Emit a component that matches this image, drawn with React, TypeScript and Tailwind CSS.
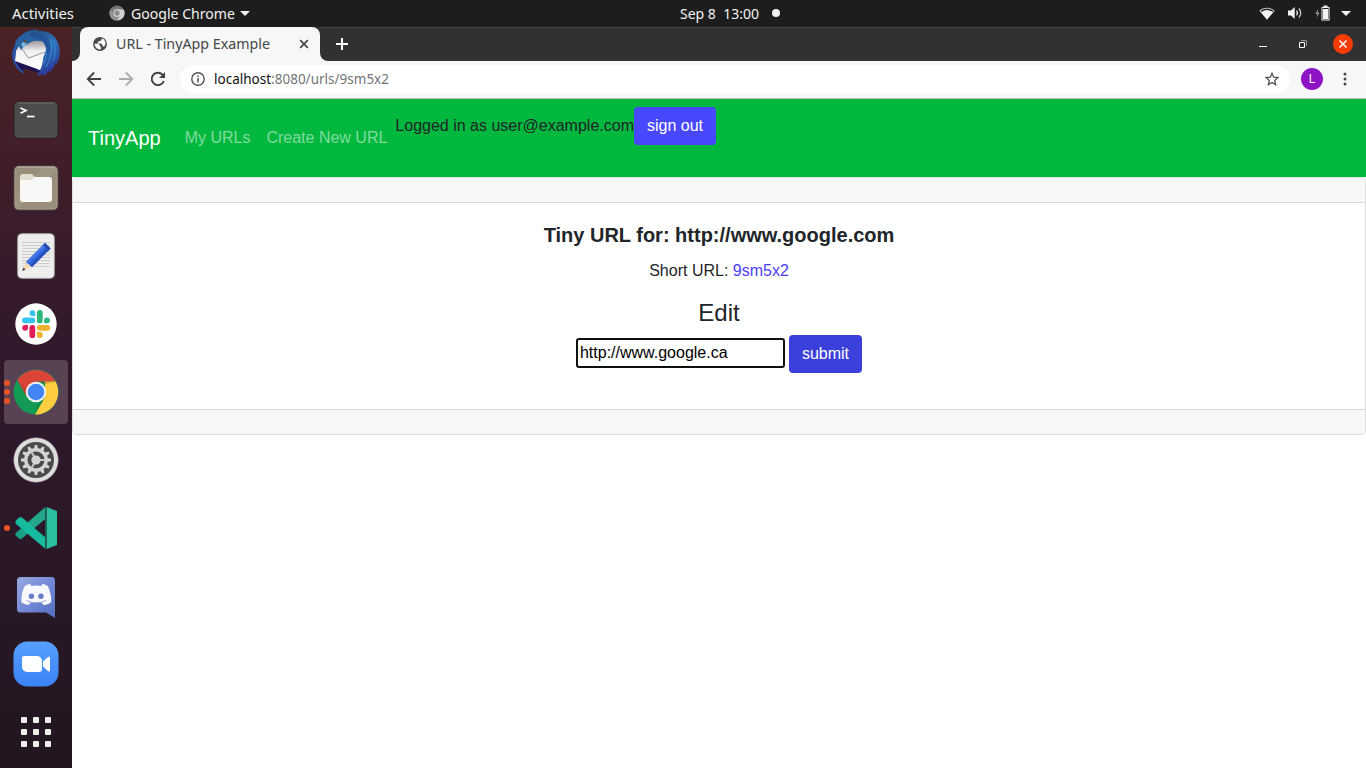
import type { ReactNode } from "react";

const UI = "font-['Noto_Sans',sans-serif]";

function Label({ width, size, children, className }: { width: number; size: number; children: string; className: string }) {
  return (
    <svg width={width + 2} height="20" className={`shrink-0 overflow-visible ${UI} ${className}`} fill="currentColor">
      <text x="0" y="15" fontSize={size} textLength={width} lengthAdjust="spacingAndGlyphs" xmlSpace="preserve">{children}</text>
    </svg>
  );
}

function TopBar() {
  return (
    <header className="flex h-[27px] shrink-0 items-center bg-[#1d1d1d] text-[#f2f2f2]">
      <div className="flex w-[680px] items-center pl-3">
        <Label width={62} size={14} className="">Activities</Label>
        <svg className="-mt-px ml-[33px] mr-[6px] shrink-0" width="16" height="16" viewBox="0 0 16 16">
          <circle cx="8" cy="8" r="7.6" fill="#777" />
          <path d="M8 4.4h6.7A7.6 7.6 0 0 1 8 15.6l3-5.6z" fill="#d0d0d0" />
          <path d="M1.6 4A7.6 7.6 0 0 0 8 15.6l2.6-5L5 10z" fill="#929292" />
          <circle cx="8" cy="8" r="3.7" fill="#ddd" />
          <circle cx="8" cy="8" r="2.7" fill="#8c8c8c" />
        </svg>
        <Label width={104} size={14} className="">Google Chrome</Label>
        <svg className="ml-[3px]" width="10" height="5" viewBox="0 0 10 5"><path d="M0 0h10L5 5z" fill="#f2f2f2" /></svg>
      </div>
      <Label width={79} size={14} className="">{"Sep 8  13:00"}</Label>
      <div className="-mt-px ml-[11px] size-2 rounded-full bg-[#f2f2f2]" />
      <div className="-mt-px ml-auto flex items-center pr-[15px]">
        <svg width="16" height="13" viewBox="0 0 16 13">
          <path d="M.4 3.7C4.8-.2 11.2-.2 15.6 3.7L8 12.8z" fill="#f2f2f2" />
          <path d="M2 4.4c3.7-2.6 8.3-2.6 12 0" fill="none" stroke="#1d1d1d" strokeWidth="1.4" />
        </svg>
        <svg className="ml-[12px]" width="16" height="14" viewBox="0 0 16 14">
          <path d="M1 4.5h3L7.7 1v12L4 9.5H1z" fill="#f2f2f2" />
          <path d="M9.6 4.7q1.6 2.3 0 4.6" fill="none" stroke="#f2f2f2" strokeWidth="1.3" />
          <path d="M12 2.5q3.4 4.5 0 9" fill="none" stroke="#ccc" strokeWidth="1.3" />
        </svg>
        <svg className="ml-[12px]" width="16" height="16" viewBox="0 0 16 16">
          <path d="M3.2 4L.4 9h2L1.5 13l3-5.3H2.8z" fill="#999" />
          <path d="M8.5 .5h4V2h2v13.5h-8V2h2z" fill="#f2f2f2" />
          <path d="M7.5 3h6v11.5h-6z" fill="#1d1d1d" /><path d="M8 4h5v10H8z" fill="#f2f2f2" />
        </svg>
        <svg className="ml-[10px]" width="10" height="5" viewBox="0 0 10 5"><path d="M0 0h10L5 5z" fill="#f2f2f2" /></svg>
      </div>
    </header>
  );
}

function DockItem({ children, active, dots = 0 }: { children: ReactNode; active?: boolean; dots?: number }) {
  return (
    <div className="relative flex h-[68px] shrink-0 items-center justify-center">
      <div className={active ? "flex size-16 items-center justify-center rounded-[4px] bg-[#574354]" : "flex size-16 items-center justify-center"}>{children}</div>
      {dots > 0 && (
        <div className="absolute left-1 top-0 flex h-full flex-col justify-center gap-[3px]">
          {Array.from({ length: dots }, (_, i) => <i key={i} className="block size-[6px] rounded-full bg-[#e95420]" />)}
        </div>
      )}
    </div>
  );
}

const teeth = Array.from({ length: 12 }, (_, i) => i * 30);

function Dock() {
  return (
    <nav className="flex w-[72px] shrink-0 flex-col justify-end overflow-hidden bg-linear-to-b from-[#4b2226] from-0% via-[#30182d] via-45% to-[#231620] pb-[2px]">
      <DockItem>
        <svg width="50" height="50" viewBox="0 0 50 50" className="overflow-visible">
          <defs>
            <linearGradient id="bird" x1="0" y1="0" x2=".5" y2="1"><stop stopColor="#214a80" /><stop offset=".25" stopColor="#255489" /><stop offset=".55" stopColor="#2b74bd" /><stop offset="1" stopColor="#2b3f9c" /></linearGradient>
            <linearGradient id="letter" x1="0" y1="0" x2="0" y2="1"><stop stopColor="#8d8790" /><stop offset=".4" stopColor="#f3f2f3" /><stop offset="1" stopColor="#fff" /></linearGradient>
          </defs>
          <path d="M5 17C0 23 0 32 4 38c2 4 5 7 10 9l-3-6 9 2L9 22z" fill="#2951a3" />
          <path d="M4 34l2 3c2 3 4 6 7 8l-1-4 17 5 1-3-22-10z" fill="#211052" />
          <path d="M7 14C11 6 18 2.500 24 2.500c2 0 3 .5 4 1.500 10-1 17 5 19.500 13 2.500 8 1 15-2 20l-1-1c-1 4-3 7-6 9l-1-1-4 5-1-2-7 2 4-6-4 1 5-9-1-15z" fill="url(#bird)" />
          <path d="M5 17l8-3 18-2 4 9c0 5-3 8-3 12-1 4-1 7-3 10L4 34l1-8z" fill="url(#letter)" />
          <path d="M9 19l8.500 12L34 25" fill="none" stroke="#8a868e" strokeWidth=".9" />
          <path d="M5 24c-3-7 0-12 4-15C13 6 17 4 21 4c-2 2-2 4-1 6 5-2 13 0 16 6-7-3-14-3-19 1l-4 2-3 4-2-4z" fill="#285f9f" />
          <path d="M12 15l4 1-4 5-2-4z" fill="#71b9dd" /><circle cx="14" cy="14.500" r="1.400" fill="#5c5143" />
          <path d="M21 6c9-2 16 3 18 10 1 6-1 12-5 17l2-10C34 15 29 10 21 10z" fill="#235096" opacity=".8" />
          <path d="M39 12q5 12-4 28M43 16q3 9-1 18M36 26l-4 12" stroke="#348dce" strokeWidth="1" fill="none" />
        </svg>
      </DockItem>
      <DockItem>
        <svg width="46" height="38" viewBox="0 0 46 38">
          <rect x="1" y="1" width="44" height="36" rx="4" fill="#4c4c4c" stroke="#2a2225" />
          <path d="M4.5 1.9h37" stroke="#858585" strokeWidth=".8" /><path d="M4 35.8h38" stroke="#606060" strokeWidth=".8" />
          <path d="M7.5 7l5.5 2.600-5.500 2.600" fill="none" stroke="#fff" strokeWidth="1.700" /><path d="M14 15.500h7.500" stroke="#fff" strokeWidth="1.700" />
        </svg>
      </DockItem>
      <DockItem>
        <svg width="46" height="46" viewBox="0 0 46 46">
          <rect x="1" y="1" width="44" height="44" rx="4.5" fill="#988e7b" stroke="#4d4140" />
          <path d="M2 31L31 2h11a2 2 0 0 1 2 2L4 44a2 2 0 0 1-2-2z" fill="#9f9582" />
          <path d="M4 2h38" stroke="#c5bfb3" /><rect x="2" y="2" width="42" height="42" rx="3.5" fill="none" stroke="#aaa18f" strokeWidth=".7" />
          <path d="M7 19v-7a3 3 0 0 1 3-3h8q1.5 0 2.5 1.5T23 12h13v7z" fill="#e2dfd2" />
          <path d="M7 15h12l3-3h14a3 3 0 0 1 3 3v19a3 3 0 0 1-3 3H10a3 3 0 0 1-3-3z" fill="#f8f8f7" />
        </svg>
      </DockItem>
      <DockItem>
        <svg width="38" height="46" viewBox="0 0 38 46">
          <rect x=".7" y=".7" width="36.6" height="44.6" rx="4" fill="#eee" stroke="#a9a5a8" />
          <path d="M5 9.5h28M5 12.5h28M5 15.5h28M5 18.5h28M5 21.5h28M5 24.5h28M5 27.5h28M5 30.5h28M5 33.5h28" stroke="#ccc" />
          <path d="M5 38l4-9 6 5z" fill="#f7d9b9" /><path d="M5 38l1.400-3.200 2.200 1.700z" fill="#333" />
          <path d="M9 29L28 10l5.500 5.500L15 34z" fill="#3264dc" /><path d="M9 29L28 10l2 2-19 18.700z" fill="#4777e7" /><path d="M13 32.300L31.500 13.500l2 2L15 34z" fill="#2450c0" />
          <path d="M26 12l2-2 5.500 5.500-2 2z" fill="#234cad" />
        </svg>
      </DockItem>
      <DockItem>
        <svg width="42" height="42" viewBox="0 0 42 42">
          <circle cx="21" cy="21" r="20.7" fill="#fff" />
          <g fill="#36c5f0"><path d="M20.3 13h-3a2.9 2.9 0 1 1 3-2.9z" /><rect x="7" y="14.4" width="13.3" height="5.8" rx="2.9" /></g>
          <g fill="#2eb67d"><rect x="21.9" y="7" width="5.8" height="13.3" rx="2.9" /><path d="M29.1 20.3v-3a2.9 2.9 0 1 1 2.9 3z" /></g>
          <g fill="#ecb22e"><rect x="21.9" y="21.9" width="13.3" height="5.8" rx="2.9" /><path d="M21.9 29.1h3a2.9 2.9 0 1 1-3 2.9z" /></g>
          <g fill="#e01e5a"><rect x="14.4" y="21.9" width="5.8" height="13.3" rx="2.9" /><path d="M13 21.9v3A2.9 2.9 0 1 1 10 21.9z" /></g>
        </svg>
      </DockItem>
      <DockItem active dots={3}>
        <svg width="46" height="46" viewBox="0 0 46 46">
          <circle cx="23" cy="23" r="22.5" fill="#139b55" />
          <path d="M4.3 11A22.5 22.5 0 0 1 42.6 12.5H23L14 28z" fill="#dc4437" />
          <path d="M42.6 12.5A22.5 22.5 0 0 1 22 45.5L32 28V12.5z" fill="#ffcd40" />
          <path d="M23 12.5h19.600L32 15zM4.3 11L14 28l-1-9z" fill="#9b2e27" opacity=".3" />
          <path d="M22 45.5L32 28l-7 5z" fill="#087b42" opacity=".4" />
          <circle cx="23" cy="23" r="10.3" fill="#f3f3f3" /><circle cx="23" cy="23" r="8.3" fill="#4285f4" />
        </svg>
      </DockItem>
      <DockItem>
        <svg width="46" height="46" viewBox="0 0 46 46">
          <circle cx="23" cy="23" r="22.3" fill="#dedede" stroke="#8c858b" strokeWidth=".6" /><circle cx="23" cy="23" r="18" fill="#4a4b4a" />
          {teeth.map((a) => <path key={a} d="M21 12l.8-4h2.4L25 12z" fill="#d6d6d6" transform={`rotate(${a} 23 23)`} />)}
          <circle cx="23" cy="23" r="10.2" fill="none" stroke="#d3d3d3" strokeWidth="3.4" />
          <path d="M25 23h7M22 21l-3.5-6M22 25l-3.5 6" stroke="#c8c8c8" strokeWidth="2" />
          <circle cx="23" cy="23" r="4.6" fill="#d4d4d4" />
        </svg>
      </DockItem>
      <DockItem dots={1}>
        <svg width="44" height="44" viewBox="0 0 44 44" className="overflow-visible">
          <path d="M31 1.5V13L8 32.5q-1.5 1-3 0l-3-2.7q-1.5-1.5 0-3z" fill="#1a9f85" />
          <path d="M31 1.5V13L19 23l-6-6z" fill="#23a58a" />
          <path d="M2 14.5L5 11.5q1.5-1 3 0L31 31v11.5L2 18q-1.5-1.5 0-3.5z" fill="#16ba9e" />
          <path d="M32.5 1L43 5v34l-10.500 4z" fill="#2abf9f" /><path d="M31.7 1v42" stroke="#155b53" strokeWidth="1.4" />
        </svg>
      </DockItem>
      <DockItem>
        <svg width="40" height="42" viewBox="0 0 40 42" className="overflow-visible">
          <defs><linearGradient id="discord" x2="1" y2="1"><stop stopColor="#98a9de" /><stop offset=".5" stopColor="#7389d8" /><stop offset="1" stopColor="#536cbc" /></linearGradient></defs>
          <path d="M4.5 2h31A3.5 3.5 0 0 1 39 5.5V43l-9-5.500H4.5A3.5 3.5 0 0 1 1 34V5.500A3.5 3.5 0 0 1 4.5 2z" fill="url(#discord)" />
          <path d="M15 11l-.5-2C12 9 10 10 8.500 11.300 6.500 15.500 5 21 5.300 27q3 3 7.200 3l1.800-2.600h11.400L27.500 30q4.800 0 7.800-3c.2-6-1.300-11.500-3.300-15.700C30.500 10 28.500 9 26 9l-.5 2q-5-.8-10.500 0z" fill="#f8f9ff" />
          <path d="M10.500 25.500q9.700 4.500 19.500 0" fill="none" stroke="#8c9bd2" strokeWidth=".8" />
          <circle cx="15.4" cy="21.3" r="2.7" fill="#647cc8" /><circle cx="25" cy="21.3" r="2.7" fill="#647cc8" />
        </svg>
      </DockItem>
      <DockItem>
        <svg width="46" height="46" viewBox="0 0 46 46">
          <defs><linearGradient id="zoom" x2="0" y2="1"><stop stopColor="#57a0ff" /><stop offset="1" stopColor="#3983f6" /></linearGradient></defs>
          <rect x=".5" y=".5" width="45" height="45" rx="14" fill="url(#zoom)" />
          <path d="M11 15h13a5 5 0 0 1 5 5v8q0 3-3 3H14a5 5 0 0 1-5-5v-9q0-2 2-2zM30 20.500l5-4.500q2-1.500 2 1v12q0 2.500-2 1l-5-4.500z" fill="#fff" />
        </svg>
      </DockItem>
      <DockItem>
        <div className="grid grid-cols-3 gap-[6px]">
          {Array.from({ length: 9 }, (_, i) => <i key={i} className="block size-[6px] rounded-[1px] bg-[#eeeeeb]" />)}
        </div>
      </DockItem>
    </nav>
  );
}

function Tabs() {
  return (
    <div className="flex h-[34px] items-stretch border-t border-[#454343] bg-[#323031]">
      <div className="flex w-2 items-end bg-[#f7f7f7]"><div className="h-full w-2 rounded-br-lg bg-[#323031]" /></div>
      <div className="-mt-px flex w-[240px] bg-[#323031]">
        <div className="flex w-full items-center rounded-t-lg bg-[#f7f7f7] pl-[13px]">
          <svg width="14" height="14" viewBox="0 0 14 14" className="shrink-0">
            <circle cx="7" cy="7" r="6.9" fill="#454749" />
            <path d="M1.300 6.800h4l1.700 1.500v1.500h1v2.800Q2 12.500 1.300 6.800zM8.500 1.500V3L7 4H5.500v1.500H4.300v1H8L9.500 8v1.500h1.800Q13.800 6 11.500 3.300L10.500 2z" fill="#f7f7f7" />
          </svg>
          <div className="ml-[9px] flex w-[183px]"><Label width={154} size={14} className="text-[#454749]">URL - TinyApp Example</Label></div>
          <svg width="10" height="10" viewBox="0 0 10 10" className="shrink-0"><path d="M1.2 1.2l7.6 7.6m0-7.600L1.2 8.8" stroke="#454749" strokeWidth="1.7" /></svg>
        </div>
      </div>
      <div className="flex w-2 bg-[#f7f7f7]"><div className="h-full w-2 rounded-bl-lg bg-[#323031]" /></div>
      <div className="flex flex-1 items-center pb-px pl-2">
        <svg width="12" height="12" viewBox="0 0 12 12"><path d="M6 0v12M0 6h12" stroke="#fff" strokeWidth="2" /></svg>
        <div className="ml-auto flex items-center pr-[13px]">
          <svg width="8" height="10" viewBox="0 0 8 10"><path d="M0 7.5h8" stroke="#fff" /></svg>
          <svg className="ml-8 mr-[26px]" width="8" height="8" viewBox="0 0 8 8"><path d="M2 .5h5.500V6" fill="none" stroke="#969595" /><path d="M.5 2.500h5v5h-5z" fill="none" stroke="#fff" /></svg>
          <svg width="20" height="20" viewBox="0 0 20 20"><circle cx="10" cy="10" r="10" fill="#f93b06" /><path d="M6.500 6.500l7 7m0-7l-7 7" stroke="#fff" strokeWidth="1.5" /></svg>
        </div>
      </div>
    </div>
  );
}

function Toolbar() {
  return (
    <div className="flex h-[38px] items-center border-b border-[#c0c0c0] bg-[#f7f7f7] pb-px pl-[14px]">
      <svg width="16" height="16" viewBox="0 0 16 16"><path d="M15 8H2m6.200-6.500L1.700 8l6.500 6.500" fill="none" stroke="#3f4143" strokeWidth="1.8" /></svg>
      <svg className="ml-4" width="16" height="16" viewBox="0 0 16 16"><path d="M1 8h13M7.800 1.500L14.300 8l-6.500 6.500" fill="none" stroke="#a9abad" strokeWidth="1.8" /></svg>
      <svg className="ml-4" width="16" height="16" viewBox="0 0 16 16"><path d="M13.800 10A6.200 6.200 0 1 1 12.400 3.600L14 5.200" fill="none" stroke="#3f4143" strokeWidth="1.9" /><path d="M15 1v6H9z" fill="#3f4143" /></svg>
      <div className="ml-[14px] flex h-7 w-[1110px] items-center rounded-full bg-white pl-[11px] pr-[11px]">
        <svg width="14" height="14" viewBox="0 0 14 14"><circle cx="7" cy="7" r="6.200" fill="none" stroke="#505254" strokeWidth="1.4" /><path d="M7 6v4.500M7 3.400V5" stroke="#505254" strokeWidth="1.5" /></svg>
        <svg className="ml-[9px] overflow-visible font-['Noto_Sans',sans-serif]" width="180" height="20">
          <text x="0" y="15" fontSize="14" textLength="175" lengthAdjust="spacingAndGlyphs"><tspan fill="#111">localhost</tspan><tspan fill="#737578">:8080/urls/9sm5x2</tspan></text>
        </svg>
        <svg className="ml-auto" width="14" height="14" viewBox="0 0 14 14"><path d="M7 1.300l1.700 3.900 4.200.4-3.200 2.800.9 4.200L7 10.400l-3.600 2.200.9-4.200L1.100 5.600l4.200-.4z" fill="none" stroke="#505254" strokeWidth="1.3" /></svg>
      </div>
      <div className="ml-[11px] flex size-[22px] items-center justify-center rounded-full bg-[#8e13c4] font-['Roboto',sans-serif] text-[12px] text-white">L</div>
      <svg className="ml-[19.5px]" width="4" height="14" viewBox="0 0 4 14" fill="#47494b"><circle cx="2" cy="2" r="1.500" /><circle cx="2" cy="7" r="1.500" /><circle cx="2" cy="12" r="1.500" /></svg>
    </div>
  );
}

function Site() {
  return (
    <main className="flex-1 bg-white font-['Liberation_Sans',sans-serif] text-base leading-6 text-[#212529]">
      <nav className="flex h-[78px] bg-[#00b83d] px-4 py-2">
        <div className="flex items-center">
          <a className="mr-4 text-xl leading-[30px] text-white">TinyApp</a>
          <a className="px-2 text-white/50">My URLs</a>
          <a className="px-2 text-white/50">Create New URL</a>
        </div>
        <div className="flex items-start">
          <span className="mt-[7px]">Logged in as user@example.com</span>
          <button className="h-[38px] rounded bg-[#4848ff] px-[13px] text-white">sign out</button>
        </div>
      </nav>
      <section className="rounded border border-[#dfdfdf] text-center">
        <div className="h-[25px] rounded-t-[3px] border-b border-[#d9d9d9] bg-[#f7f7f7]" />
        <div className="h-[206px] p-5">
          <h5 className="mb-3 text-xl leading-6 font-bold">Tiny URL for: http://www.google.com</h5>
          <p className="mb-[15px]">Short URL: <a className="text-[#4c40fb]">9sm5x2</a></p>
          <h4 className="mb-2 text-2xl leading-[29px]">Edit</h4>
          <form className="flex items-start justify-center gap-1">
            <input defaultValue="http://www.google.ca" className="mt-[3px] h-[30px] w-[209px] rounded-[3px] border-2 border-[#101010] px-[2px] pb-px text-black" />
            <button type="button" className="h-[38px] rounded bg-[#3b40dd] px-[13px] text-white">submit</button>
          </form>
        </div>
        <div className="h-[25px] rounded-b-[3px] border-t border-[#d9d9d9] bg-[#f7f7f7]" />
      </section>
    </main>
  );
}

export default function App() {
  return (
    <div className="flex h-[768px] w-[1366px] flex-col overflow-hidden">
      <TopBar />
      <div className="flex min-h-0 flex-1">
        <Dock />
        <div className="flex min-w-0 flex-1 flex-col"><Tabs /><Toolbar /><Site /></div>
      </div>
    </div>
  );
}
